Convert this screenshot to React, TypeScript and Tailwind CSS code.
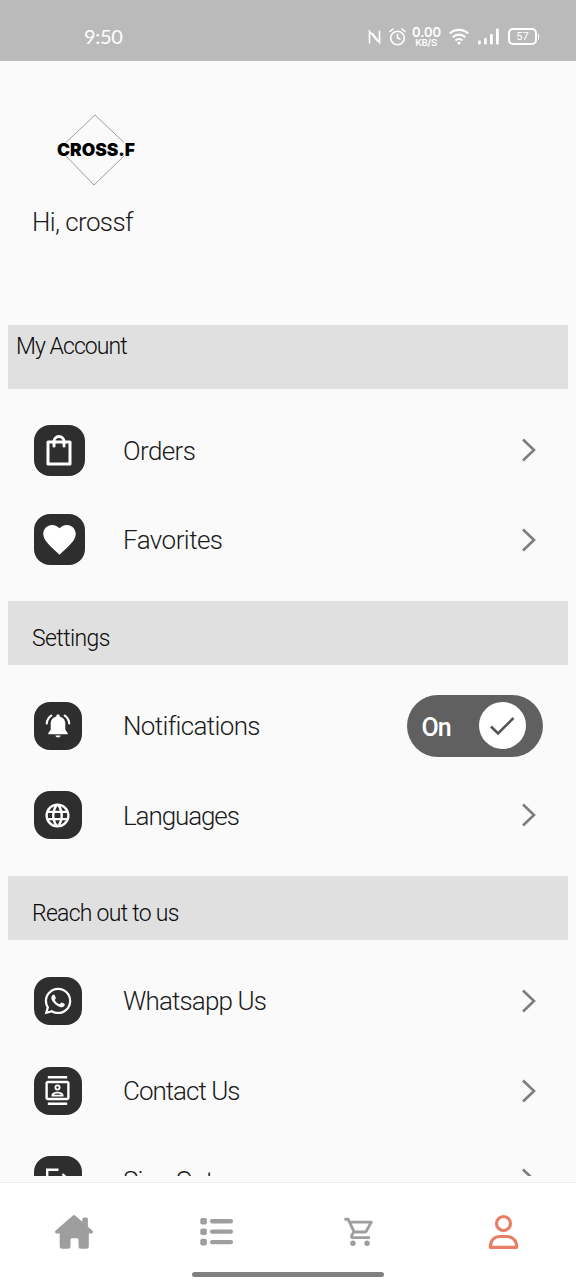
import React from 'react';
import { MdFavorite, MdLanguage, MdOutlineContacts, MdOutlineShoppingCart, MdWhatsapp } from 'react-icons/md';

const BagIcon = () => (
  <svg width="28" height="34" viewBox="0 0 28 34" fill="none" stroke="white" strokeWidth="3" strokeLinecap="round" strokeLinejoin="round">
    <path d="M3 9h22v22H3z" />
    <path d="M9 13V8.500a5 5 0 0 1 10 0V13" />
  </svg>
);

const BellIcon = () => (
  <svg width="26" height="26" viewBox="0 0 26 26" fill="white">
    <path d="M13 1.200a1.700 1.700 0 0 1 1.700 1.700v.5c3.500.8 5.600 3.700 5.600 7.100v6.200l2.400 3.300v1.300H3.300V20l2.400-3.300v-6.200c0-3.400 2.100-6.300 5.600-7.100v-.5A1.700 1.700 0 0 1 13 1.200z" />
    <path d="M10.400 22.500h5.200a2.600 2.100 0 0 1-5.200 0z" />
    <path d="M6.300 2.700C3.600 4.500 2 7.200 1.800 10.500M19.700 2.700c2.700 1.800 4.300 4.500 4.500 7.800" fill="none" stroke="white" strokeWidth="2.200" strokeLinecap="round" />
  </svg>
);

const SignOutIcon = () => (
  <svg width="26" height="26" viewBox="0 0 26 26" fill="none" stroke="white" strokeWidth="2.400">
    <path d="M13.500 2.700H2.200v20.600h11.300M8 13h15M17.500 7l6 6-6 6" />
  </svg>
);

const HomeIcon = () => (
  <svg className="ml-0.5" width="38" height="34" viewBox="0 0 38 34" fill="#9e9e9e">
    <path d="M17.600.700a2 2 0 0 1 2.800 0l6.900 6V4a1.600 1.600 0 0 1 1.600-1.600h2.400A1.600 1.600 0 0 1 32.900 4v7.700l4.400 3.900c1.300 1.200.500 3-1.100 3h-2.400v12.700a2.500 2.500 0 0 1-2.500 2.500h-5.300a2.500 2.500 0 0 1-2.500-2.500v-6.600a1.500 1.500 0 0 0-1.500-1.500h-5a1.500 1.500 0 0 0-1.500 1.500v6.600a2.500 2.500 0 0 1-2.500 2.500H7.200a2.500 2.500 0 0 1-2.500-2.500V18.600H1.800c-1.600 0-2.400-1.800-1.100-3z" />
  </svg>
);

const ListIcon = () => (
  <svg width="34" height="28" viewBox="0 0 34 28" fill="#9e9e9e">
    <rect x="0.300" y="0" width="6.600" height="6.600" rx="1.800" />
    <rect x="0.300" y="10.400" width="6.600" height="6.600" rx="1.800" />
    <rect x="0.300" y="20.800" width="6.600" height="6.600" rx="1.800" />
    <rect x="10" y="1.100" width="23" height="4.300" rx="2" />
    <rect x="10" y="11.500" width="23" height="4.300" rx="2" />
    <rect x="10" y="21.900" width="23" height="4.300" rx="2" />
  </svg>
);

const UserIcon = () => (
  <svg width="32" height="36" viewBox="0 0 32 36" fill="none" stroke="#e87e63" strokeWidth="3.200" strokeLinejoin="round">
    <circle cx="15.500" cy="9.500" r="7" />
    <path d="M2.300 33.300c0-7 4.200-10.800 10-10.800h6.400c5.800 0 10 3.800 10 10.800z" />
  </svg>
);

const Chevron = () => (
  <svg className="mr-[39.500px]" width="16" height="24" viewBox="0 0 16 24" fill="none" stroke="#7d7d7d" strokeWidth="2.600">
    <path d="M2 1.500L13 12 2 22.500" />
  </svg>
);

const Toggle = () => (
  <button className="mr-[33.500px] flex h-[62px] w-[136px] items-center justify-between rounded-full bg-[#606060] pr-[17px] pl-[15px]">
    <span className="pt-1 text-[25px] font-medium tracking-[-1px] text-white">On</span>
    <span className="flex h-[47px] w-[47px] items-center justify-center rounded-full bg-white">
      <svg width="26" height="20" viewBox="0 0 26 20" fill="none" stroke="#555" strokeWidth="2.600">
        <path d="M2 10.500l7 7L24.500 2" />
      </svg>
    </span>
  </button>
);

const sections = [
  {
    title: 'My Account',
    titleClass: 'pl-2 pt-[5px] tracking-[-0.950px]',
    boxClass: 'h-[51px] w-[51px]',
    items: [
      { label: 'Orders', icon: <BagIcon />, labelClass: 'tracking-[-0.600px]' },
      { label: 'Favorites', icon: <MdFavorite className="h-[39px] w-[39px]" />, labelClass: 'tracking-[-0.550px]' }
    ]
  },
  {
    title: 'Settings',
    titleClass: 'pl-6 pt-[21px] tracking-[-0.600px]',
    boxClass: 'h-12 w-12',
    items: [
      { label: 'Notifications', icon: <BellIcon />, labelClass: 'tracking-[-0.650px]', toggle: true },
      { label: 'Languages', icon: <MdLanguage className="h-[29px] w-[29px]" />, labelClass: 'tracking-[-1.100px]' }
    ]
  },
  {
    title: 'Reach out to us',
    titleClass: 'pl-6 pt-[21px] tracking-[-0.720px]',
    boxClass: 'h-12 w-12',
    items: [
      { label: 'Whatsapp Us', icon: <MdWhatsapp className="h-8 w-8" />, labelClass: 'tracking-[-0.850px]' },
      { label: 'Contact Us', icon: <MdOutlineContacts className="h-[29px] w-[29px]" />, labelClass: 'tracking-[-1px]' },
      { label: 'Sign Out', icon: <SignOutIcon />, labelClass: 'tracking-[-0.800px]' }
    ]
  }
];

const StatusBar = () => (
  <div className="flex h-[61px] shrink-0 items-center bg-[#bababa] pt-3 text-white">
    <span className="ml-[84px] flex-1 pb-px font-['Lato',sans-serif] text-[20px] tracking-[-0.300px]">9:50</span>
    <svg className="mr-2" width="13" height="16" viewBox="0 0 13 16" fill="none" stroke="white" strokeWidth="1.600">
      <path d="M1.500 14.500V2.500l8.500 10M11.500 1.500v12L4 4" />
    </svg>
    <svg className="mr-[6px]" width="17" height="18" viewBox="0 0 17 18" fill="none" stroke="white" strokeWidth="1.600" strokeLinecap="round">
      <circle cx="8.500" cy="10" r="6.800" />
      <path d="M8.500 6.500V10l2.500 1M1 3.500L4 1M16 3.500L13 1" />
    </svg>
    <div className="mr-[9px] w-7 text-center font-['Inter',sans-serif]">
      <div className="text-[13px] leading-[12px] font-semibold">0.00</div>
      <div className="text-[9.500px] leading-[10px] font-semibold tracking-[-0.300px]">KB/S</div>
    </div>
    <svg className="mr-[9px]" width="20" height="17" viewBox="0 0 20 17" fill="none" stroke="white" strokeWidth="2.200">
      <path d="M.800 5.500a13.500 13.500 0 0 1 18.400 0M3.700 9.200a9.200 9.200 0 0 1 12.600 0M6.500 12.500a5.200 5.200 0 0 1 7 0" />
      <circle cx="10" cy="15" r="1.600" fill="white" stroke="none" />
    </svg>
    <svg className="mr-[9px]" width="21" height="17" viewBox="0 0 21 17" fill="white">
      <rect x="0" y="12.500" width="2.800" height="4" rx="1" />
      <rect x="6" y="10" width="2.800" height="6.500" rx="1" />
      <rect x="12" y="6" width="2.800" height="10.500" rx="1" />
      <rect x="18" y="0.500" width="2.800" height="16" rx="1" />
    </svg>
    <div className="flex h-[17px] w-[29px] items-center justify-center rounded-[5px] border-2 border-white text-[11px] leading-none">57</div>
    <div className="mr-[37px] ml-px h-1.5 w-px bg-white" />
  </div>
);

const Logo = () => (
  <svg className="ml-[54px]" width="84" height="74" viewBox="0 0 84 74">
    <path d="M12 29.500L41 2l29 27.500M12 43l28 29 30-29" fill="none" stroke="#777" strokeWidth="0.700" />
    <text x="3" y="42.500" textLength="78" lengthAdjust="spacingAndGlyphs" fontSize="17.500" fontWeight="900" fontFamily="Inter, sans-serif" fill="black">CROSS.F</text>
  </svg>
);

export default function App() {
  return (
    <div className="flex h-[1280px] w-[576px] flex-col overflow-hidden bg-[#fafafa] font-['Roboto',sans-serif] text-[#1a1a1a]">
      <StatusBar />
      <main className="h-[1115px] shrink-0 overflow-hidden">
        <header className="h-[264.300px] pt-[52px]">
          <Logo />
          <p className="mt-[17px] ml-8 text-[26px] leading-9 font-[350] tracking-[-0.600px]">Hi, crossf</p>
        </header>
        {sections.map((section) => (
          <section key={section.title}>
            <h2 className={`mx-2 h-16 bg-[#e0e0e0] text-[23px] leading-[34px] font-[350] text-[#0a0a0a] ${section.titleClass}`}>
              {section.title}
            </h2>
            <ul className="py-4">
              {section.items.map((item) => (
                <li key={item.label} className="flex h-[89.700px] items-center">
                  <div className="ml-[33.500px] w-[89.500px]">
                    <div className={`flex items-center justify-center rounded-2xl bg-[#2e2e2e] text-white ${section.boxClass}`}>
                      {item.icon}
                    </div>
                  </div>
                  <span className={`flex-1 pt-[2px] text-[26px] font-[350] ${item.labelClass}`}>{item.label}</span>
                  {'toggle' in item ? <Toggle /> : <Chevron />}
                </li>
              ))}
            </ul>
          </section>
        ))}
      </main>
      <div className="h-[7px] shrink-0 border-b border-[#eeeeee]" />
      <nav className="flex flex-1 flex-col items-center bg-white">
        <div className="grid h-[89px] w-full grid-cols-4 place-items-center pt-[9px] pl-px">
          <HomeIcon />
          <ListIcon />
          <MdOutlineShoppingCart className="h-[34px] w-[34px] text-[#9e9e9e]" />
          <UserIcon />
        </div>
        <div className="h-[5px] w-48 rounded-full bg-[#808080]" />
      </nav>
    </div>
  );
}
